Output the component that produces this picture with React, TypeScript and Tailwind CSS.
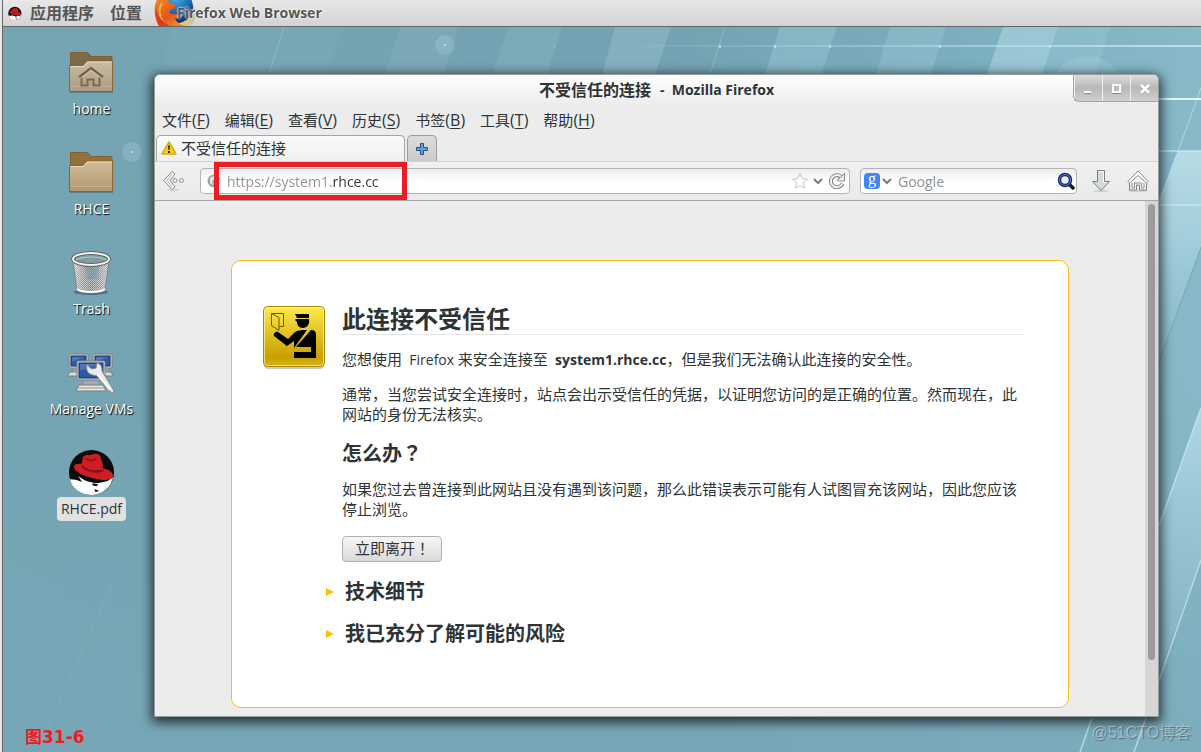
import { useState } from 'react';
import type { ReactNode } from 'react';

const menus = [
  { label: '文件', key: 'F' },
  { label: '编辑', key: 'E' },
  { label: '查看', key: 'V' },
  { label: '历史', key: 'S' },
  { label: '书签', key: 'B' },
  { label: '工具', key: 'T' },
  { label: '帮助', key: 'H' },
];

function Wallpaper() {
  return (
    <svg
      className="absolute inset-0 h-full w-full"
      viewBox="3 0 1198 752"
      preserveAspectRatio="none"
      aria-hidden="true"
    >
      <defs>
        <linearGradient id="wallBase" x1="0" y1="0" x2="1" y2="0">
          <stop offset="0" stopColor="#75a4b3" />
          <stop offset="0.55" stopColor="#73a2b2" />
          <stop offset="0.8" stopColor="#7baec0" />
          <stop offset="1" stopColor="#88b9c8" />
        </linearGradient>
        <linearGradient id="wallLine" x1="0" y1="0" x2="1" y2="0">
          <stop offset="0" stopColor="#c5e4ec" stopOpacity="0" />
          <stop offset="0.5" stopColor="#c5e4ec" stopOpacity="0.4" />
          <stop offset="1" stopColor="#c5e4ec" stopOpacity="0.9" />
        </linearGradient>
        <linearGradient id="wallGlow" x1="0" y1="0" x2="0" y2="1">
          <stop offset="0" stopColor="#c0e2ea" stopOpacity="0.85" />
          <stop offset="0.4" stopColor="#a5d0de" stopOpacity="0.8" />
          <stop offset="1" stopColor="#8fc0ce" stopOpacity="0" />
        </linearGradient>
        <linearGradient id="wallGlow2" x1="0" y1="0" x2="0" y2="1">
          <stop offset="0" stopColor="#b4dae8" stopOpacity="0.9" />
          <stop offset="1" stopColor="#8fc0ce" stopOpacity="0.1" />
        </linearGradient>
        <linearGradient id="wallFloor" x1="0" y1="0" x2="0" y2="1">
          <stop offset="0.5" stopColor="#78a8b8" stopOpacity="0" />
          <stop offset="1" stopColor="#78a8b8" stopOpacity="0.7" />
        </linearGradient>
      </defs>
      <rect width="1201" height="752" fill="url(#wallBase)" />
      <rect width="1201" height="752" fill="url(#wallFloor)" />
      <g fill="#a9d2df">
        <path d="M173 27h170l-17 47H158z" opacity="0.08" />
        <path d="M400 27h58l-15 47h-58z" opacity="0.12" />
        <path d="M508 27h54l-15 47h-54z" opacity="0.16" />
        <path d="M615 27h56l-16 47h-53z" opacity="0.3" />
        <path d="M780 27h57l-15 47h-57z" opacity="0.32" />
        <path d="M890 27h56l-15 47h-55z" opacity="0.28" />
        <path d="M1003 27h55l-16 47h-55z" opacity="0.65" />
        <path d="M1058 27h52l-14 47h-54z" opacity="0.25" />
      </g>
      <path d="M284 27l-15 47M725 27l-15 47" stroke="#a9d2df" strokeOpacity="0.4" />
      <rect x="600" y="45" width="601" height="2" fill="url(#wallLine)" />
      <g fill="#c5e4ec" opacity="0.75">
        <rect x="719" y="45" width="2" height="3" />
        <rect x="774" y="45" width="2" height="3" />
        <rect x="829" y="45" width="2" height="3" />
        <rect x="939" y="45" width="2" height="3" />
        <rect x="1049" y="45" width="2" height="3" />
        <rect x="554" y="45" width="1" height="2" opacity="0.6" />
      </g>
      <circle cx="1087" cy="92" r="36" fill="#a9d2df" opacity="0.3" />
      <circle cx="445" cy="45" r="10" fill="#a9d2df" opacity="0.3" />
      <circle cx="445" cy="45" r="1" fill="#c5e4ec" />
      <circle cx="132" cy="152" r="10" fill="#a9d2df" opacity="0.3" />
      <circle cx="132" cy="152" r="1" fill="#c5e4ec" />
      <path d="M1178 151h23v96l-60 163V245z" fill="url(#wallGlow)" />
      <path d="M1201 408v152l-60 160V575z" fill="url(#wallGlow2)" />
      <path d="M1150 99h51" stroke="#e4f6fa" strokeWidth="2" />
      <path d="M1150 151h51M1150 205h51" stroke="#cfeaf1" strokeOpacity="0.6" strokeWidth="2" />
      <path d="M1201 88l-50 137" stroke="#cfeaf1" strokeOpacity="0.6" />
      <path d="M1201 247l-50 137" stroke="#6fa3b5" strokeOpacity="0.8" />
      <path d="M1201 408l-50 140M1201 560l-67 192M1092 718l-12 34" stroke="#cfeaf1" strokeOpacity="0.7" strokeWidth="1.5" />
      <path d="M112 585L42 740" stroke="#a9d2df" strokeOpacity="0.15" />
    </svg>
  );
}

function RedHat({ className }: { className: string }) {
  return (
    <svg className={className} viewBox="0 -2 49 49" aria-hidden="true">
      <circle cx="24" cy="24" r="23" fill="#0c0c0c" />
      <path d="M2 31c4 0 8 1 10 2l18 2 10-2 6-4c-2 10-11 18-22 18C13 47 4 40 2 31z" fill="#fff" />
      <path d="M10 27c3 3 10 7 18 8 4 0 9 0 11-2-1 2-3 4-6 5l2 5-4-3-9-3-8-4z" fill="#fff" />
      <path d="M25 35l6 1-2 2-4-1zM27 41l5 2-4 1z" fill="#0c0c0c" />
      <path d="M15 9c2-4 6-2 9-3 4-2 8-1 9 2 2 5 3 10 3 12 6 1 10 4 10 7 0 4-8 6-16 4C19 29 6 24 6 18c0-3 4-3 8-3z" fill="#cc1e24" />
      <path d="M14 15c3 5 10 8 21 6l1 2c-9 3-19 0-22-5z" fill="#8c0f14" />
      <path d="M18 10l5 2 6-2" stroke="#8c0f14" strokeWidth="1.5" fill="none" />
    </svg>
  );
}

function FirefoxLogo() {
  return (
    <svg className="h-full w-full" viewBox="0 0 44 26" aria-hidden="true">
      <defs>
        <radialGradient id="ffBall" cx="0.45" cy="0.2" r="0.8">
          <stop offset="0" stopColor="#3fb4e8" />
          <stop offset="0.55" stopColor="#1c6cb5" />
          <stop offset="1" stopColor="#132a5c" />
        </radialGradient>
        <linearGradient id="ffFox" x1="0" y1="0" x2="1" y2="1">
          <stop offset="0" stopColor="#f08a24" />
          <stop offset="0.5" stopColor="#e4531f" />
          <stop offset="1" stopColor="#f6a42b" />
        </linearGradient>
        <linearGradient id="ffTail" x1="0" y1="0" x2="1" y2="0">
          <stop offset="0" stopColor="#f5cf4a" />
          <stop offset="1" stopColor="#b9b9a8" />
        </linearGradient>
      </defs>
      <path d="M34 0c7 4 10 14 6 21-2 3-4 5-6 5H22z" fill="url(#ffTail)" opacity="0.8" />
      <circle cx="23" cy="7" r="16" fill="url(#ffBall)" />
      <path d="M3 0C-1 7 0 18 5 26h31c-7 0-13-2-15-8 3 1 6 0 8-3-4 1-6-1-9-1-4 0-5-2-4-4l5-2c1-2 1-4-1-4-2 0-4-1-6-4z" fill="url(#ffFox)" />
      <path d="M8 3c-4 6-3 15 3 22" stroke="#f9b13c" strokeWidth="2" fill="none" />
      <path d="M5 26C2 21 1 15 2 8c2 8 6 14 14 18z" fill="#d93b1c" />
    </svg>
  );
}

function FolderIcon({ home }: { home?: boolean }) {
  const id = home ? 'folderHome' : 'folderPlain';
  return (
    <svg className="h-12 w-12" viewBox="0 0 48 48" aria-hidden="true">
      <defs>
        <linearGradient id={id} x1="0" y1="0" x2="0" y2="1">
          <stop offset="0" stopColor={home ? '#c9bca5' : '#d2bd98'} />
          <stop offset="1" stopColor={home ? '#ab9a80' : '#b3986f'} />
        </linearGradient>
      </defs>
      <rect x="2" y="44" width="43" height="2" fill="#3b5a64" opacity="0.5" />
      <path d="M2.500 44V5.500h17l4 4h20.500V44z" fill={home ? '#7d6a4b' : '#94713c'} stroke="#80602e" />
      <path d="M1.500 18.500h13.500l4-4.500h25.500v30.500h-43z" fill={`url(#${id})`} stroke="#8a6428" />
      <path d="M2.500 19.500h13l4-4.500h24" stroke="#e8dcc5" fill="none" />
      <path d="M3 39.500h41" stroke="#fff" strokeOpacity="0.2" />
      {home && (
        <>
          <path d="M11 30l12-9 12 9" stroke="#6e5a3a" strokeWidth="2" fill="none" />
          <path d="M13.500 30v8.500h6v-6h6v6h6V30" stroke="#7d6947" strokeWidth="2" fill="none" />
          <path d="M12 32l11-8 11 8" stroke="#d8ccb5" strokeOpacity="0.6" fill="none" />
        </>
      )}
    </svg>
  );
}

function TrashIcon() {
  return (
    <svg className="h-12 w-12" viewBox="0 0 48 48" aria-hidden="true">
      <defs>
        <pattern id="mesh" width="2" height="2" patternUnits="userSpaceOnUse">
          <rect width="2" height="2" fill="#cfd3d2" />
          <rect width="1" height="1" fill="#7e8584" />
          <rect x="1" y="1" width="1" height="1" fill="#949b9a" />
        </pattern>
        <linearGradient id="trashShade" x1="0" y1="0" x2="1" y2="0">
          <stop offset="0" stopColor="#fff" stopOpacity="0.5" />
          <stop offset="0.5" stopColor="#777" stopOpacity="0.2" />
          <stop offset="1" stopColor="#fff" stopOpacity="0.4" />
        </linearGradient>
      </defs>
      <ellipse cx="23" cy="45" rx="17" ry="3" fill="#24434e" opacity="0.5" />
      <path d="M5 12l4 31c2 4 26 4 28 0l4-31z" fill="url(#mesh)" stroke="#6a6f6e" />
      <path d="M17 20h14v12H18z" fill="#70a0ae" opacity="0.6" />
      <path d="M5 12l4 31c2 4 26 4 28 0l4-31z" fill="url(#trashShade)" />
      <path d="M9 42c5 4 23 4 28 0" stroke="#fff" strokeWidth="2" fill="none" />
      <ellipse cx="23" cy="12" rx="18" ry="6" fill="#7f9ca4" stroke="#4d5150" strokeWidth="3.500" />
      <ellipse cx="23" cy="12" rx="18" ry="6" fill="none" stroke="#f3f3f3" strokeWidth="2" />
      <path d="M8 13c5-4 25-4 30 0" stroke="#b9c9cd" fill="none" />
    </svg>
  );
}

function MonitorShape({ x, y, w, h }: { x: number; y: number; w: number; h: number }) {
  return (
    <g>
      <rect x={x} y={y} width={w} height={h} rx="1" fill="#d9d9d5" stroke="#7c7e7a" />
      <rect x={x + 2} y={y + 2} width={w - 4} height={h - 4} fill="#2a5aa5" stroke="#16336b" />
      <path d={`M${x + 3} ${y + 3}h${w - 6}l-${w - 6} ${h / 3}z`} fill="#6d96d2" opacity="0.5" />
    </g>
  );
}

function ManageVmsIcon() {
  return (
    <svg className="h-12 w-12" viewBox="1 0 48 48" aria-hidden="true">
      <MonitorShape x={3} y={7} w={19} h={14} />
      <MonitorShape x={27} y={7} w={19} h={14} />
      <path d="M4 25h10l2 4H1zM36 25h9l2 4H36z" fill="#dcdcd8" stroke="#7c7e7a" />
      <path d="M8 21h6v4H8zM37 21h5v4h-5z" fill="#9a9c98" />
      <path d="M18 34h14v5H18z" fill="#a9aba7" />
      <path d="M13 38h24l3 6H10z" fill="#e4e4e0" stroke="#7c7e7a" />
      <path d="M12 41h26" stroke="#9a9c98" />
      <MonitorShape x={11} y={14} w={28} h={19} />
      <path d="M22 17c-3 4-1 10 5 11l4 1 15 17 2-2-12-20c0-4-1-7-5-8l-1 5-4 1-3-2z" fill="#e9eaea" stroke="#888a85" />
      <path d="M32 28l12 15" stroke="#fff" strokeWidth="2" />
    </svg>
  );
}

function DesktopItem({ label, selected, children }: { label: string; selected?: boolean; children: ReactNode }) {
  return (
    <li>
      <button type="button" className="flex flex-col items-center gap-[2px]">
        {children}
        {selected ? (
          <span className="h-6 rounded bg-[#e2e2e2] px-1 text-sm leading-6 text-[#2e3436]">{label}</span>
        ) : (
          <span className="h-6 px-1 text-sm leading-6 text-white [text-shadow:1px_1px_1px_#000]">{label}</span>
        )}
      </button>
    </li>
  );
}

function WindowControls() {
  const base = 'flex h-[26px] w-7 items-center justify-center border-l border-[#f0f0f0]';
  return (
    <div className="flex justify-self-end overflow-hidden rounded-bl-md border-b border-l border-[#a2a2a2] bg-gradient-to-b from-[#dcdcdc] via-[#b8b8b8] to-[#cfcfcf]">
      <button type="button" aria-label="最小化" className={base}>
        <svg className="h-3 w-3" viewBox="1 0 12 12">
          <path d="M2 10h7" stroke="#fff" strokeWidth="2" />
          <path d="M2 11.500h7" stroke="#8a8a8a" />
        </svg>
      </button>
      <button type="button" aria-label="最大化" className={base}>
        <svg className="h-3 w-3" viewBox="1 0 12 12">
          <path d="M2 11.500h9" stroke="#8a8a8a" />
          <rect x="3" y="3" width="7" height="7" fill="none" stroke="#fff" strokeWidth="2" />
        </svg>
      </button>
      <button type="button" aria-label="关闭" className={base}>
        <svg className="h-3 w-3" viewBox="0 -1 12 12">
          <path d="M2 3l8 8M10 3l-8 8" stroke="#8a8a8a" strokeWidth="2" />
          <path d="M2 2l8 8M10 2l-8 8" stroke="#fff" strokeWidth="2.500" />
        </svg>
      </button>
    </div>
  );
}

function ChevronSmall() {
  return (
    <svg className="h-3 w-[10px] shrink-0" viewBox="0 0 10 12" aria-hidden="true">
      <path d="M1 4l4 4 4-4" stroke="#7b7d7a" strokeWidth="2" fill="none" />
    </svg>
  );
}

function NavBar() {
  const [url, setUrl] = useState('https://system1.rhce.cc');
  const [query, setQuery] = useState('');

  return (
    <div className="flex h-10 items-center border-b border-t border-b-[#a5a5a5] border-t-[#d2d2d2] bg-gradient-to-b from-[#f1f1f1] to-[#e9e9e9] pl-2 pr-[9px]">
      <button type="button" aria-label="后退" className="mr-[15px]">
        <svg className="h-[22px] w-[22px]" viewBox="0 0 22 22">
          <ellipse cx="10" cy="20" rx="6" ry="1.500" fill="#000" opacity="0.1" />
          <path d="M9 1.500l3 2.500-5 6.500 5 6.500-3 2.500L.8 10.500z" fill="#f5f5f5" stroke="#8c8c8c" strokeLinejoin="round" />
          <path d="M9 4l-5 6.500 5 6.500" fill="none" stroke="#b5b5b5" />
          <circle cx="12" cy="10.500" r="2" fill="#fff" stroke="#8c8c8c" />
          <circle cx="18.500" cy="10.500" r="2" fill="#fff" stroke="#8c8c8c" />
        </svg>
      </button>

      <div className="relative mr-[10px] flex h-[26px] flex-1 items-center rounded border border-[#b4b4b4] bg-gradient-to-b from-[#ececec] via-white to-white pl-[6px] pr-1">
        <svg className="h-[14px] w-[14px] shrink-0" viewBox="0 0 14 14" aria-hidden="true">
          <circle cx="7" cy="7" r="6.500" fill="#a3a3a3" />
          <path d="M3 4l4-2 1 3-3 2 1 4-3-2zM9 6l4-1v4l-3 2z" fill="#e8e8e8" />
        </svg>
        <input
          aria-label="网址"
          value={url}
          onChange={(e) => setUrl(e.target.value)}
          className="ml-[6px] h-6 min-w-0 flex-1 bg-[linear-gradient(90deg,#8f9191_106px,#2e3436_106px)] bg-clip-text text-sm text-transparent caret-black outline-none"
        />
        <svg className="h-4 w-4 shrink-0" viewBox="0 0 16 16" aria-hidden="true">
          <path d="M8 .8l2.200 4.700 5 .7-3.600 3.600.9 5.200L8 12.600 3.500 15l.9-5.200L.8 6.200l5-.7z" fill="#fff" stroke="#c2c2c2" strokeLinejoin="round" />
        </svg>
        <button type="button" aria-label="历史记录" className="ml-[5px]">
          <ChevronSmall />
        </button>
        <button type="button" aria-label="重新载入" className="ml-[6px]">
          <svg className="h-4 w-4" viewBox="0 0 16 16">
            <path d="M13.500 10.500A6 6 0 1 1 12 3.800" fill="none" stroke="#858585" strokeWidth="4" />
            <path d="M13.300 10.600A6 6 0 1 1 12 3.800" fill="none" stroke="#f4f4f4" strokeWidth="2" />
            <path d="M15.500.5v7.500H8.500V6.500l2.500-1.500z" fill="#f4f4f4" stroke="#858585" strokeLinejoin="round" />
            <circle cx="7.500" cy="8.500" r="1.500" fill="#fff" />
          </svg>
        </button>
        {/* highlight frame drawn over the address */}
        <div className="pointer-events-none absolute -top-[7px] left-[13px] h-[38px] w-[193px] border-[5px] border-[#ed1c24]" />
      </div>

      <div className="flex h-[26px] w-[217px] items-center rounded border border-[#b4b4b4] bg-gradient-to-b from-[#ececec] via-white to-white pl-[3px] pr-px">
        <span className="flex h-4 w-4 shrink-0 items-center justify-center rounded-sm bg-[#4285f4] pb-1 font-['Liberation_Serif',serif] text-base leading-4 text-white">
          g
        </span>
        <button type="button" aria-label="搜索引擎" className="ml-[2px]">
          <ChevronSmall />
        </button>
        <input
          aria-label="搜索"
          value={query}
          placeholder="Google"
          onChange={(e) => setQuery(e.target.value)}
          className="ml-[6px] h-6 min-w-0 flex-1 bg-transparent text-sm text-[#2e3436] outline-none placeholder:text-[#8f9191]"
        />
        <button type="button" aria-label="开始搜索">
          <svg className="h-[18px] w-[18px]" viewBox="0 0 18 18">
            <path d="M12 12l4 4" stroke="#1a1a1a" strokeWidth="3.500" strokeLinecap="round" />
            <circle cx="8" cy="8" r="5.500" fill="#e6ecf8" stroke="#1f2c70" strokeWidth="3.500" />
            <circle cx="8" cy="8" r="5.500" fill="none" stroke="#5a74c8" />
          </svg>
        </button>
      </div>

      <button type="button" aria-label="下载" className="ml-[14px]">
        <svg className="h-[22px] w-5" viewBox="0 0 20 22">
          <ellipse cx="10" cy="21" rx="7" ry="1" fill="#000" opacity="0.12" />
          <path d="M6.500.5h7v11h5L10 20.500 1.500 11.500h5z" fill="#d5dadb" stroke="#7d807f" strokeLinejoin="round" />
          <path d="M7.500 1.500h5v11h3" stroke="#f5f7f7" fill="none" />
        </svg>
      </button>
      <button type="button" aria-label="主页" className="ml-4">
        <svg className="h-[22px] w-[22px]" viewBox="0 0 22 22">
          <ellipse cx="11" cy="21" rx="10" ry="1" fill="#000" opacity="0.12" />
          <path d="M2.500 12v8h7v-5h3v5h7v-8L11 5z" fill="#f4f4f1" stroke="#7d807a" />
          <path d="M5 13v5h2.500v-5h7v5H17v-5" stroke="#8f928c" fill="none" />
          <path d="M.8 11.500L11 1l10.200 10.500-1.700 1.500L11 5.500 2.500 13z" fill="#fff" stroke="#8c8f89" strokeLinejoin="round" />
        </svg>
      </button>
    </div>
  );
}

function PassportIcon() {
  return (
    <svg className="h-16 w-[62px] shrink-0" viewBox="0 0 62 64" aria-hidden="true">
      <defs>
        <linearGradient id="badge" x1="0" y1="0" x2="0" y2="1">
          <stop offset="0" stopColor="#ffe94e" />
          <stop offset="0.85" stopColor="#c7a000" />
          <stop offset="1" stopColor="#d6b414" />
        </linearGradient>
      </defs>
      <rect x="1" y="3" width="60" height="60" rx="4" fill="#000" opacity="0.2" />
      <rect x="0.500" y="0.500" width="61" height="60" rx="4" fill="url(#badge)" stroke="#a48500" />
      <rect x="1.500" y="1.500" width="59" height="58" rx="3" fill="none" stroke="#fff6a8" strokeOpacity="0.7" />
      <path d="M8.500 7.500h12v13h-4M8.500 7.500v12l7.500 5v-13z" fill="none" stroke="#6d5c08" />
      <path d="M32 8h14v4H34zM33 13h13c1 5-2 9-6 9s-6-3-6-6l-2-2z" />
      <path d="M15 26l10 7 6-6c3-3 7-3 13-3L31 42v-7l-7 5-13-10c-1-3 2-5 4-4z" />
      <path d="M48 24c3 0 5 1 5 5v23H31v-6h17v-5H33z" />
    </svg>
  );
}

function RiskSection({ title, children }: { title: string; children: ReactNode }) {
  return (
    <details className="-ml-4 mt-[18px]">
      <summary className="flex h-6 cursor-pointer list-none items-center gap-[11px]">
        <svg className="h-2 w-2" viewBox="0 0 8 8" aria-hidden="true">
          <path d="M0 0l8 4-8 4z" fill="#ffbf00" />
        </svg>
        <h2 className="text-xl font-bold leading-6">{title}</h2>
      </summary>
      {children}
    </details>
  );
}

// full-width punctuation that sits in the middle of its box
function Mark({ children }: { children: ReactNode }) {
  return (
    <span lang="ja" className="font-['Noto_Sans_CJK_JP',sans-serif]">
      {children}
    </span>
  );
}

function ErrorPage() {
  return (
    <div className="flex min-h-0 flex-1">
      <main className="flex-1 bg-[#ececec] px-[76px] pb-2 pt-[59px]">
        <div className="flex min-h-full gap-[17px] rounded-[10px] border border-[#f8bd1a] bg-white pb-14 pl-[31px] pr-11 pt-[45px] text-[15px] leading-5">
          <PassportIcon />
          <div className="min-w-0 flex-1">
            <h1 className="border-b border-[#e6e6e6] pb-[2px] text-2xl font-bold leading-[26px]">此连接不受信任</h1>
            <p className="mt-[14px]">
              您想使用<span className="text-sm leading-5">&nbsp; Firefox </span>来安全连接至
              <span className="text-sm leading-5">&nbsp; <b>system1.rhce.cc</b></span>
              ，但是我们无法确认此连接的安全性。
            </p>
            <p className="mt-[14px]">
              通常，当您尝试安全连接时，站点会出示受信任的凭据，以证明您访问的是正确的位置。然而现在，此网站的身份无法核实。
            </p>
            <h2 className="mt-[17px] h-6 text-xl font-bold leading-6">
              怎么办<Mark>？</Mark>
            </h2>
            <p className="mt-[14px]">
              如果您过去曾连接到此网站且没有遇到该问题，那么此错误表示可能有人试图冒充该网站，因此您应该停止浏览。
            </p>
            <button
              type="button"
              className="mt-[17px] block h-[26px] w-[100px] rounded-sm border border-[#b0b0b0] bg-gradient-to-b from-[#f6f6f6] to-[#dadada] pb-[2px] pl-3 text-left text-[15px] leading-5"
            >
              立即离开<Mark>！</Mark>
            </button>
            <RiskSection title="技术细节">{null}</RiskSection>
            <RiskSection title="我已充分了解可能的风险">{null}</RiskSection>
          </div>
        </div>
      </main>
      <div className="flex w-[13px] justify-center bg-[#d6d6d6] pt-[3px]">
        <div className="h-[89%] w-[7px] rounded-full bg-[#9b9b9d]" />
      </div>
    </div>
  );
}

function BrowserWindow() {
  return (
    <section className="mb-[35px] mr-[42px] mt-[47px] flex flex-1 flex-col overflow-hidden rounded-t-md border border-[#9c9c9c] bg-[#ececec] text-[#2e3436] shadow-[0_3px_12px_2px_rgba(0,0,0,0.75)]">
      <header className="grid grid-cols-[1fr_auto_1fr] items-start bg-gradient-to-b from-white to-[#ececec]">
        <span />
        <div className="flex h-[30px] items-center gap-[9px] font-bold">
          <span className="text-base">不受信任的连接</span>
          <span className="text-sm">-&nbsp; Mozilla Firefox</span>
        </div>
        <WindowControls />
      </header>

      <nav className="flex h-[30px] items-center gap-[15px] pb-px pl-[7px] text-[15px]">
        {menus.map((menu) => (
          <button key={menu.key} type="button" className="leading-6">
            {menu.label}
            <span className="text-base">
              (<span className="underline underline-offset-2">{menu.key}</span>)
            </span>
          </button>
        ))}
      </nav>

      <div className="flex h-[26px] gap-[2px] px-px">
        <button
          type="button"
          className="flex w-[249px] items-center gap-1 rounded-t-[5px] border border-b-0 border-[#a5a5a5] bg-gradient-to-b from-[#fafafa] to-[#f0f0f0] pb-px pl-1 text-[15px]"
        >
          <svg className="h-4 w-4" viewBox="0 0 16 16" aria-hidden="true">
            <path d="M8 2l7 12H1z" fill="#f5d21e" stroke="#d9ae00" strokeWidth="1.500" strokeLinejoin="round" />
            <path d="M7 5.500h2L8.600 10H7.400zM7 11h2v2H7z" fill="#2b2b1c" />
          </svg>
          不受信任的连接
        </button>
        <button
          type="button"
          aria-label="新标签页"
          className="flex w-[30px] items-center justify-center rounded-t-[5px] border border-b-0 border-[#9c9c9c] bg-gradient-to-b from-[#dcdcdc] to-[#cbcbcb]"
        >
          <svg className="h-3 w-3" viewBox="0 0 12 12">
            <path d="M4.500.5h3v4h4v3h-4v4h-3v-4h-4v-3h4z" fill="#6c9bd6" stroke="#23508f" />
          </svg>
        </button>
      </div>

      <NavBar />
      <ErrorPage />
    </section>
  );
}

export default function App() {
  return (
    <div lang="zh-CN" className="flex min-h-screen bg-[#e6e6e6] pl-[2px] font-['Open_Sans','Noto_Sans_CJK_SC',sans-serif]">
      <div className="relative flex flex-1 flex-col border-l border-[#666] bg-[#75a4b3]">
        <Wallpaper />

        <header className="relative flex h-[27px] items-center border-b border-[#666] bg-gradient-to-b from-[#e8e8e8] to-[#d3d3d3] pl-[5px] font-bold text-[#555] [text-shadow:0_1px_0_#fff]">
          <RedHat className="h-[14px] w-[14px]" />
          <button type="button" className="ml-2 h-6 text-base leading-6">应用程序</button>
          <button type="button" className="ml-4 h-6 text-base leading-6">位置</button>
          <button type="button" className="relative ml-3 flex h-full items-center pl-[23px] text-sm">
            <span className="absolute left-0 top-0 h-[26px] w-11">
              <FirefoxLogo />
            </span>
            <span className="relative [text-shadow:0_0_2px_#fff,0_0_2px_#fff]">Firefox Web Browser</span>
          </button>
        </header>

        <div className="relative flex flex-1">
          <div className="flex w-[151px] flex-col pt-5">
            <ul className="flex flex-col items-center gap-[26px] pl-[26px]">
              <DesktopItem label="home">
                <FolderIcon home />
              </DesktopItem>
              <DesktopItem label="RHCE">
                <FolderIcon />
              </DesktopItem>
              <DesktopItem label="Trash">
                <TrashIcon />
              </DesktopItem>
              <DesktopItem label="Manage VMs">
                <ManageVmsIcon />
              </DesktopItem>
              <DesktopItem label="RHCE.pdf" selected>
                <RedHat className="h-12 w-12" />
              </DesktopItem>
            </ul>
            <p className="mb-[3px] mt-auto pl-[22px] font-['DejaVu_Sans','Noto_Sans_CJK_SC',sans-serif] text-[17px] font-bold leading-6 text-[#ed1c24]">
              图31-6
            </p>
          </div>
          <BrowserWindow />
        </div>

        <p className="absolute bottom-[7px] right-[10px] font-['Liberation_Sans','Noto_Sans_CJK_SC',sans-serif] text-base leading-6 text-white/40 [text-shadow:1px_1px_1px_rgba(0,0,0,0.35)]">
          @51CTO博客
        </p>
      </div>
    </div>
  );
}
